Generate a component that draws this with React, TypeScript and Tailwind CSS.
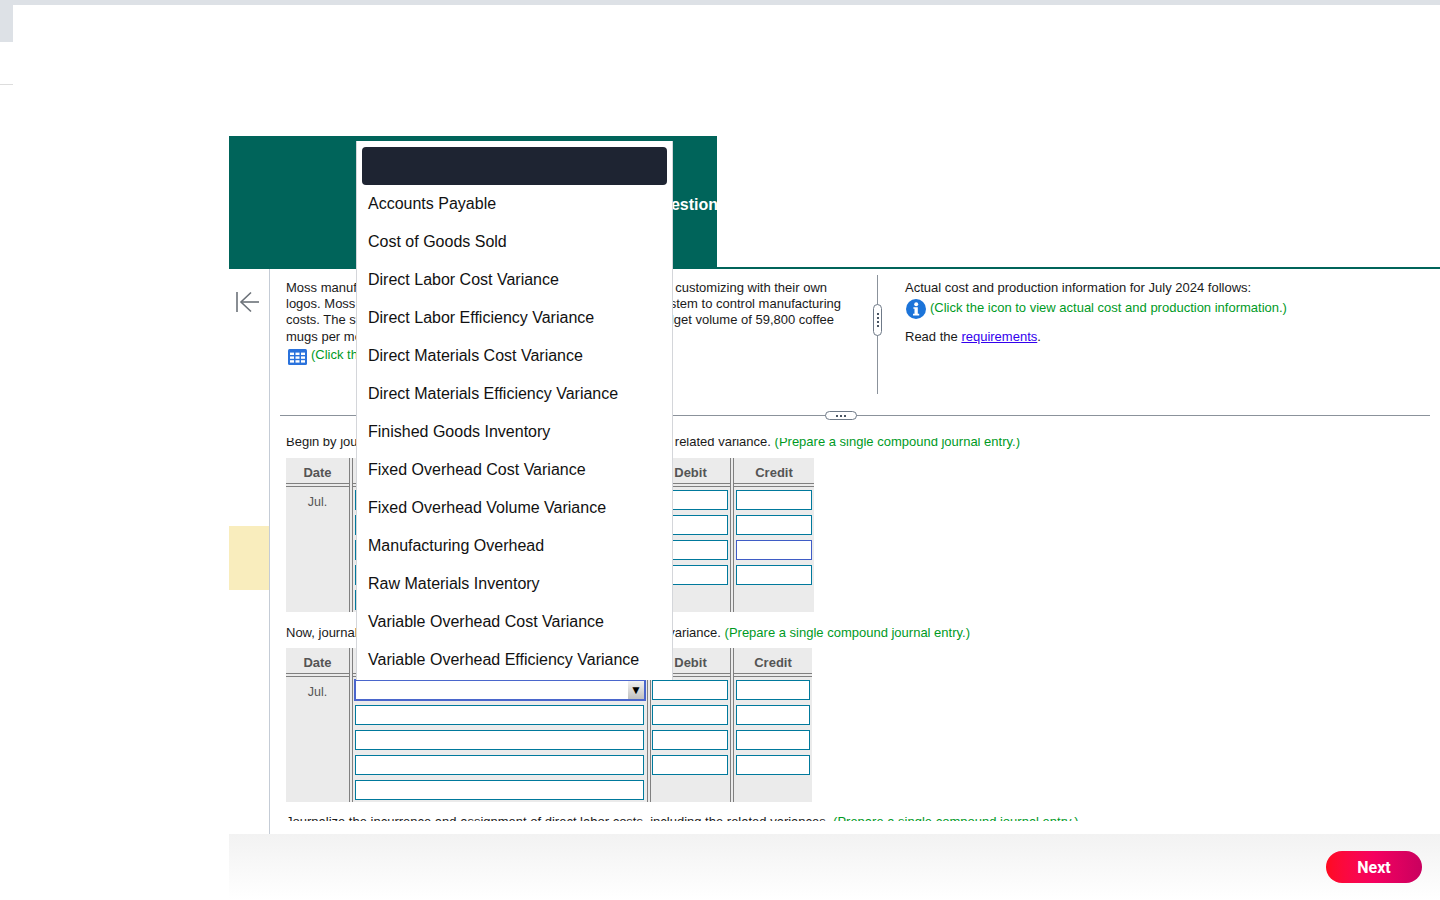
const accounts = [
  'Accounts Payable',
  'Cost of Goods Sold',
  'Direct Labor Cost Variance',
  'Direct Labor Efficiency Variance',
  'Direct Materials Cost Variance',
  'Direct Materials Efficiency Variance',
  'Finished Goods Inventory',
  'Fixed Overhead Cost Variance',
  'Fixed Overhead Volume Variance',
  'Manufacturing Overhead',
  'Raw Materials Inventory',
  'Variable Overhead Cost Variance',
  'Variable Overhead Efficiency Variance',
];

function Field({ className, highlight }: { className: string; highlight?: boolean }) {
  return (
    <div
      className={`h-[20px] bg-white border ${highlight ? 'border-[#3f5cc6]' : 'border-[#00799c]'} ${className}`}
    />
  );
}

function Column({
  title,
  width,
  first,
  last,
  children,
}: {
  title: string;
  width: string;
  first?: boolean;
  last?: boolean;
  children: React.ReactNode;
}) {
  return (
    <div className={`flex flex-col ${width} ${first ? '' : 'border-l'} ${last ? '' : 'border-r'} border-[#808080]`}>
      <div className="h-[26px] border-b border-[#808080] flex items-center justify-center text-[13px] font-bold text-[#555555] pt-[4px]">
        {title}
      </div>
      <div className="flex-1 mt-[2px] border-t border-[#808080] flex flex-col">{children}</div>
    </div>
  );
}

function JournalTable({ active, creditWidth, tableWidth }: { active?: boolean; creditWidth: string; tableWidth: string }) {
  return (
    <div className={`flex gap-[2px] h-[154px] bg-[#ebebeb] ${tableWidth}`}>
      <Column title="Date" width="w-[64px]" first>
        <div className="text-center text-[12.5px] text-[#555555] pt-[7px]">Jul.</div>
      </Column>
      <Column title="Accounts and Explanation" width="w-[296px]">
        <div className="flex flex-col gap-[5px] pt-[3px] pl-[2px]">
          {[0, 1, 2, 3, 4].map((row) =>
            active && row === 0 ? (
              <div
                key={row}
                className="relative -ml-[1px] -mt-[1px] -mb-[1px] w-[292px] h-[22px] bg-white border-2 border-[#4a66cc]"
              >
                <div className="absolute right-0 top-0 w-[16px] h-full bg-gradient-to-b from-[#f2f2f2] to-[#c0c0c0] flex items-center justify-center text-[12px] leading-none text-black">
                  ▼
                </div>
              </div>
            ) : (
              <Field key={row} className="w-[289px]" />
            ),
          )}
        </div>
      </Column>
      <Column title="Debit" width="w-[81px]">
        <div className="flex flex-col gap-[5px] pt-[3px] pl-[1px]">
          {[0, 1, 2, 3].map((row) => (
            <Field key={row} className="w-[76px]" />
          ))}
        </div>
      </Column>
      <Column title="Credit" width={creditWidth} last>
        <div className="flex flex-col gap-[5px] pt-[3px] pl-[2px]">
          {[0, 1, 2, 3].map((row) => (
            <Field key={row} className={active ? 'w-[74px]' : 'w-[76px]'} highlight={!active && row === 2} />
          ))}
        </div>
      </Column>
    </div>
  );
}

export default function App() {
  return (
    <div className="relative w-[1440px] h-[900px] overflow-hidden bg-white font-['Liberation_Sans',Arial,sans-serif] text-[13px] leading-[16.2px] text-[#1a1a1a]">
      <div className="h-[5px] bg-[#dde1e6]" />
      <div className="flex h-[895px]">
        <aside className="w-[229px] shrink-0">
          <div className="w-[13px] h-[37px] bg-[#dde1e6]" />
          <div className="w-[13px] h-px mt-[42px] bg-[#dddddd]" />
        </aside>

        <main className="flex-1 flex flex-col pt-[131px] min-w-0">
          {/* Header band */}
          <div className="flex h-[133px] shrink-0">
            <div className="w-[488px] bg-[#00645a] overflow-hidden flex items-center justify-end pt-[6px] text-[16px] font-bold text-white">
              <span className="-mr-[1px]">Question</span>
            </div>
            <div className="flex-1 border-b-2 border-[#00645a]" />
          </div>

          <div className="flex flex-1 min-h-0">
            {/* Left rail */}
            <div className="w-[41px] shrink-0 border-r border-[#c5ccd6] flex flex-col">
              <svg className="ml-[6px] mt-[22px]" width="26" height="22" viewBox="0 0 26 22" fill="none" stroke="#6b7178" strokeWidth="1.6">
                <path d="M2 1v20" />
                <path d="M24 11H6" />
                <path d="M16 1.5 6 11l10 9.5" />
              </svg>
              <div className="mt-[213px] h-[64px] bg-[#f9edbd]" />
            </div>

            <div className="flex-1 min-w-0 flex flex-col">
              {/* Top pane */}
              <div className="flex h-[146px] shrink-0">
                <div className="w-[607px] shrink-0 pl-[16px] pt-[11px]">
                  <div className="flex justify-between w-[541px]">
                    <span className="flex-1 min-w-0 overflow-hidden whitespace-nowrap">Moss manufactures coffee mugs that it sells to other companies for</span>
                    <span className="whitespace-nowrap">customizing with their own</span>
                  </div>
                  <div className="flex justify-between w-[555px]">
                    <span className="flex-1 min-w-0 overflow-hidden whitespace-nowrap">logos. Moss prepares flexible budgets and uses a standard cost</span>
                    <span className="whitespace-nowrap">system to control manufacturing</span>
                  </div>
                  <div className="flex justify-between w-[548px]">
                    <span className="flex-1 min-w-0 overflow-hidden whitespace-nowrap">costs. The standard cost of direct materials is based on a</span>
                    <span className="whitespace-nowrap">budget volume of 59,800 coffee</span>
                  </div>
                  <div>mugs per month.</div>
                  <div className="flex items-center mt-[4px] text-[#009a1f]">
                    <svg className="ml-[2px] mr-[4px]" width="19" height="16" viewBox="0 0 19 16">
                      <rect width="19" height="16" rx="1.5" fill="#2a72dc" />
                      <g fill="#ffffff">
                        <rect x="2" y="3.6" width="4" height="2.4" />
                        <rect x="7.5" y="3.6" width="4" height="2.4" />
                        <rect x="13" y="3.6" width="4" height="2.4" />
                        <rect x="2" y="7.4" width="4" height="2.4" />
                        <rect x="7.5" y="7.4" width="4" height="2.4" />
                        <rect x="13" y="7.4" width="4" height="2.4" />
                        <rect x="2" y="11.2" width="4" height="2.4" />
                        <rect x="7.5" y="11.2" width="4" height="2.4" />
                        <rect x="13" y="11.2" width="4" height="2.4" />
                      </g>
                    </svg>
                    <span className="-mt-[4px]">(Click the icon to view the standard cost information.)</span>
                  </div>
                </div>

                <div className="relative mt-[6px] h-[119px] w-px bg-[#8b929b] shrink-0">
                  <div className="absolute -left-[4px] top-[29px] w-[9px] h-[32px] rounded-[5px] bg-white border border-[#6f7a88] flex flex-col items-center justify-center gap-[2px]">
                    <span className="w-[2px] h-[2px] bg-[#4a5563]" />
                    <span className="w-[2px] h-[2px] bg-[#4a5563]" />
                    <span className="w-[2px] h-[2px] bg-[#4a5563]" />
                    <span className="w-[2px] h-[2px] bg-[#4a5563]" />
                  </div>
                </div>

                <div className="pl-[27px] pt-[11px]">
                  <div>Actual cost and production information for July 2024 follows:</div>
                  <div className="flex items-center mt-[3px] text-[#009a1f]">
                    <svg className="ml-[1px] mr-[4px]" width="20" height="20" viewBox="0 0 20 20">
                      <circle cx="10" cy="10" r="10" fill="#1c74d9" />
                      <circle cx="10.2" cy="5.2" r="2" fill="#ffffff" />
                      <path d="M7.4 8.2h4.4v6.6h1.4v1.6H7v-1.6h1.5v-5H7.4z" fill="#ffffff" />
                    </svg>
                    <span className="-mt-[3px]">(Click the icon to view actual cost and production information.)</span>
                  </div>
                  <div className="mt-[10px]">
                    Read the <span className="text-[#3300ee] underline">requirements</span>.
                  </div>
                </div>
              </div>

              {/* Pane divider */}
              <div className="relative h-px mx-[10px] bg-[#8b929b] shrink-0">
                <div className="absolute left-[545px] -top-[4px] w-[32px] h-[9px] rounded-[5px] bg-white border border-[#6f7a88] flex items-center justify-center gap-[2px]">
                  <span className="w-[2px] h-[2px] bg-[#4a5563]" />
                  <span className="w-[2px] h-[2px] bg-[#4a5563]" />
                  <span className="w-[2px] h-[2px] bg-[#4a5563]" />
                </div>
              </div>

              {/* Journal pane */}
              <div className="h-[383px] mt-[22px] overflow-hidden pl-[16px] shrink-0">
                <div className="flex justify-between w-[734px] -mt-[4px]">
                  <span className="flex-1 min-w-0 overflow-hidden whitespace-nowrap">Begin by journalizing the purchase of direct materials, including the</span>
                  <span className="whitespace-nowrap">
                    related variance. <span className="text-[#009a1f]">(Prepare a single compound journal entry.)</span>
                  </span>
                </div>
                <div className="mt-[8px]">
                  <JournalTable creditWidth="w-[81px]" tableWidth="w-[528px]" />
                </div>
                <div className="flex justify-between w-[684px] mt-[13px]">
                  <span className="flex-1 min-w-0 overflow-hidden whitespace-nowrap">Now, journalize the usage of direct materials, including the related</span>
                  <span className="whitespace-nowrap">
                    variance. <span className="text-[#009a1f]">(Prepare a single compound journal entry.)</span>
                  </span>
                </div>
                <div className="mt-[7px]">
                  <JournalTable active creditWidth="w-[79px]" tableWidth="w-[526px]" />
                </div>
                <div className="mt-[12px] whitespace-nowrap">
                  Journalize the incurrence and assignment of direct labor costs, including the related variances.{' '}
                  <span className="text-[#009a1f]">(Prepare a single compound journal entry.)</span>
                </div>
              </div>
            </div>
          </div>

          {/* Footer */}
          <div className="h-[66px] shrink-0 bg-gradient-to-b from-[#f2f2f2] to-white flex justify-end items-start pt-[17px] pr-[18px]">
            <button className="w-[96px] h-[32px] pt-[2px] rounded-full bg-gradient-to-r from-[#ff0a1e] via-[#f5005f] to-[#c9005f] text-white text-[16px] font-bold font-['Roboto',sans-serif] flex items-center justify-center">
              Next
            </button>
          </div>
        </main>
      </div>

      {/* Open account dropdown */}
      <div className="absolute left-[356px] top-[141px] w-[317px] h-[539px] bg-white border-x border-[#d4d6da] px-[5px] pt-[6px] text-[16px] leading-[20px] text-[#111111]">
        <div className="h-[38px] rounded-[4px] bg-[#1e2432]" />
        <ul>
          {accounts.map((account) => (
            <li key={account} className="h-[38px] px-[6px] flex items-center">
              {account}
            </li>
          ))}
        </ul>
      </div>
    </div>
  );
}
